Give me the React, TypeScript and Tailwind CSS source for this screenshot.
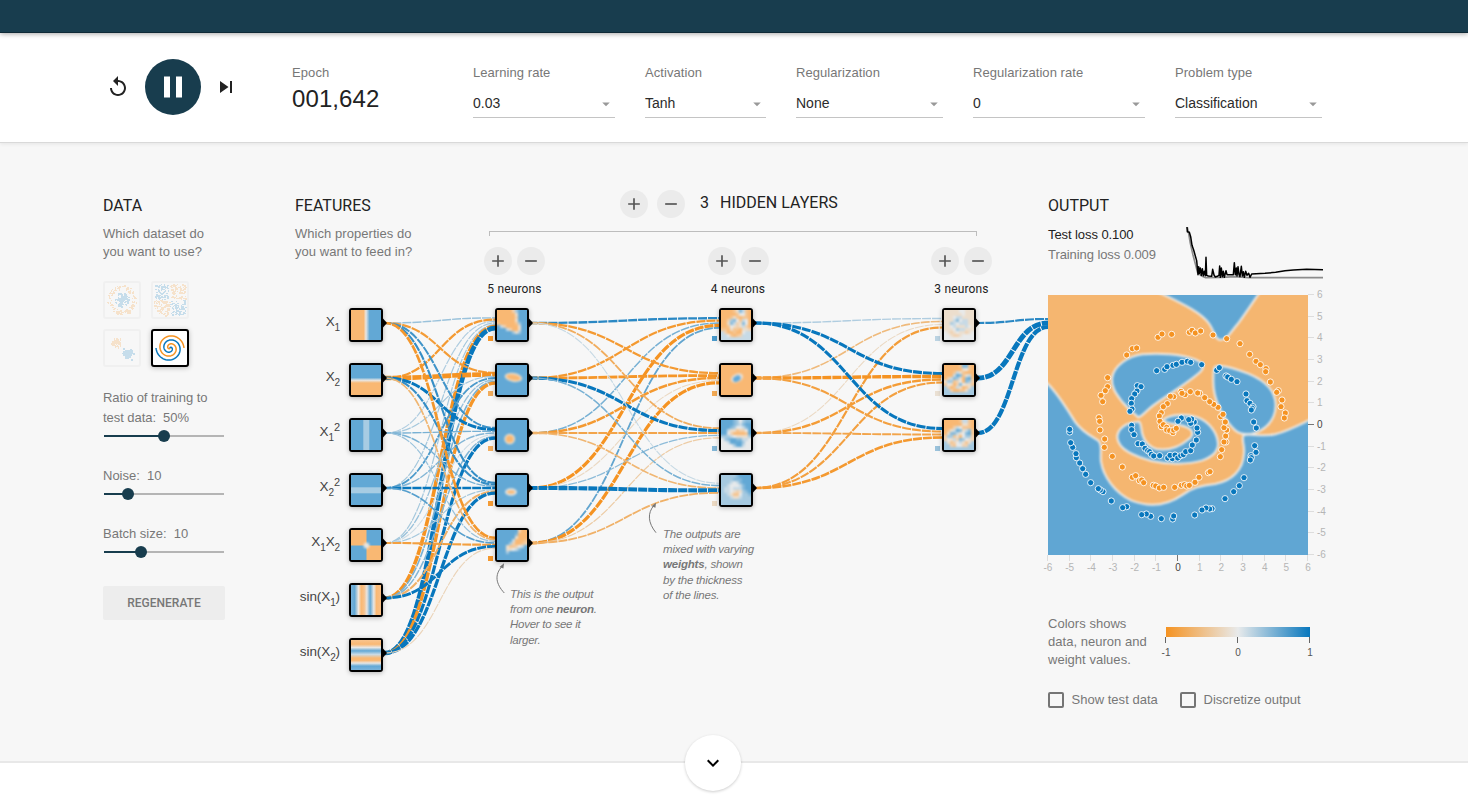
import React from "react";
import {
  MdAdd,
  MdArrowDropDown,
  MdKeyboardArrowDown,
  MdPause,
  MdRemove,
  MdReplay,
  MdSkipNext,
} from "react-icons/md";

const ORANGE = [245, 147, 34];
const GRAY = [232, 234, 235];
const BLUE = [8, 119, 189];

function mix(t: number, low: number[], high: number[]) {
  const end = t < 0 ? low : high;
  const k = Math.min(1, Math.abs(t));
  const c = GRAY.map((g, i) => Math.round(g + (end[i] - g) * k));
  return `rgb(${c[0]},${c[1]},${c[2]})`;
}

const weightColor = (t: number) => mix(t, ORANGE, BLUE);

/* ---------- controls bar ---------- */

const selects = [
  { label: "Learning rate", value: "0.03", width: "w-[142px]" },
  { label: "Activation", value: "Tanh", width: "w-[121px]" },
  { label: "Regularization", value: "None", width: "w-[147px]" },
  { label: "Regularization rate", value: "0", width: "w-[172px]" },
  { label: "Problem type", value: "Classification", width: "w-[147px]" },
];

function Controls() {
  return (
    <div className="relative z-[5] flex h-[110px] shrink-0 items-start border-b border-[#d9d9d9] bg-white pl-[106px] shadow-[0_1px_4px_rgba(0,0,0,0.08)]">
      <div className="flex h-[108px] w-[186px] items-center">
        <MdReplay size={24} className="text-[#222]" />
        <button className="ml-[15px] flex size-14 items-center justify-center rounded-full bg-[#183d4e]">
          <MdPause size={36} className="text-white" />
        </button>
        <MdSkipNext size={24} className="ml-[13px] text-[#222]" />
      </div>
      <div className="w-[181px] pt-[32px]">
        <div className="text-[13px] leading-4 tracking-[0.1px] text-[#777]">Epoch</div>
        <div className="text-[24px] leading-[36px] tracking-[0.1px] text-[#222]">001,642</div>
      </div>
      <div className="flex gap-[30px] pt-[32px]">
        {selects.map((s) => (
          <div key={s.label} className={s.width}>
            <div className="text-[13px] leading-4 tracking-[0.06px] whitespace-nowrap text-[#777]">{s.label}</div>
            <div className="mt-[7px] flex h-[30px] items-center justify-between border-b border-[#c4c4c4] pt-[2px] text-[14px] text-[#2b2b2b]">
              <span>{s.value}</span>
              <MdArrowDropDown size={18} className="text-[#999]" />
            </div>
          </div>
        ))}
      </div>
    </div>
  );
}

/* ---------- data column ---------- */

type Dot = { x: number; y: number; c: number };

function makeRandom(seed: number) {
  let s = seed;
  return () => {
    s = (s * 16807) % 2147483647;
    return s / 2147483647;
  };
}

function circleDots(): Dot[] {
  const rnd = makeRandom(41);
  const out: Dot[] = [];
  for (let i = 0; i < 120; i++) {
    const r = rnd() * 7;
    const a = rnd() * 6.283;
    out.push({ x: 17 + r * Math.cos(a), y: 17 + r * Math.sin(a), c: 1 });
  }
  for (let i = 0; i < 120; i++) {
    const r = 10.5 + rnd() * 4;
    const a = rnd() * 6.283;
    out.push({ x: 17 + r * Math.cos(a), y: 17 + r * Math.sin(a), c: -1 });
  }
  return out;
}

function xorDots(): Dot[] {
  const rnd = makeRandom(977);
  const out: Dot[] = [];
  for (let i = 0; i < 300; i++) {
    let x = rnd() * 29 - 14.5;
    let y = rnd() * 29 - 14.5;
    x += x > 0 ? 0.8 : -0.8;
    y += y > 0 ? 0.8 : -0.8;
    out.push({ x: 17 + x, y: 17 + y, c: x * y > 0 ? 1 : -1 });
  }
  return out;
}

function gaussDots(): Dot[] {
  const rnd = makeRandom(313);
  const n = () => (rnd() + rnd() + rnd() - 1.5) * 4.2;
  const out: Dot[] = [];
  for (let i = 0; i < 110; i++) {
    out.push({ x: 11 + n(), y: 12 + n(), c: -1 });
    out.push({ x: 23 + n(), y: 22.5 + n(), c: 1 });
  }
  return out;
}

function DotThumb({ dots }: { dots: Dot[] }) {
  return (
    <div className="size-[38px] rounded-[3px] border-2 border-[#f0f0f0]">
      <svg width="34" height="34" className="opacity-20" shapeRendering="crispEdges">
        {dots.map((d, i) => (
          <rect key={i} x={Math.floor(d.x)} y={Math.floor(d.y)} width={i % 2 ? 2 : 1} height={i % 3 ? 1 : 2} fill={d.c > 0 ? "#0877bd" : "#f59322"} />
        ))}
      </svg>
    </div>
  );
}

function spiralPath(delta: number) {
  const pts: string[] = [];
  for (let i = 0; i <= 90; i++) {
    const r = (i / 90) * 14;
    const t = 1.75 * (i / 90) * 2 * Math.PI + delta;
    pts.push(`${(17 + r * Math.sin(t)).toFixed(2)},${(17 - r * Math.cos(t)).toFixed(2)}`);
  }
  return pts.join(" ");
}

function SpiralThumb() {
  return (
    <div className="size-[38px] rounded-[3px] border-2 border-black bg-white shadow-[0_1px_5px_rgba(0,0,0,0.25)]">
      <svg width="34" height="34" fill="none" strokeWidth="1.5">
        <polyline points={spiralPath(0)} stroke="#0877bd" />
        <polyline points={spiralPath(Math.PI)} stroke="#f59322" />
      </svg>
    </div>
  );
}

function Slider({ fill }: { fill: string }) {
  return (
    <div className="mt-[2px] ml-px flex h-3 w-[120px] items-center">
      <div className={`h-[2px] bg-[#183d4e] ${fill}`} />
      <div className="relative z-[1] -mx-[6px] size-3 shrink-0 rounded-full bg-[#183d4e]" />
      <div className="h-[2px] flex-1 bg-[#b5b5b5]" />
    </div>
  );
}

function Heading({ children }: { children: React.ReactNode }) {
  return <h4 className="pt-px font-[Roboto] text-[16px] leading-6 text-[#222]">{children}</h4>;
}

function DataColumn() {
  return (
    <section className="w-[192px] text-[13px] text-[#777]">
      <Heading>DATA</Heading>
      <p className="mt-[7px] leading-[18px] tracking-[0.04px]">
        Which dataset do
        <br />
        you want to use?
      </p>
      <div className="mt-5 grid w-[86px] grid-cols-2 gap-[10px]">
        <DotThumb dots={circleDots()} />
        <DotThumb dots={xorDots()} />
        <DotThumb dots={gaussDots()} />
        <SpiralThumb />
      </div>
      <p className="mt-[21px] leading-5 tracking-[-0.05px]">
        Ratio of training to
        <br />
        test data:&nbsp; 50%
      </p>
      <Slider fill="w-[60px]" />
      <p className="mt-6 leading-5">Noise:&nbsp; 10</p>
      <Slider fill="w-[24px]" />
      <p className="mt-6 leading-5">Batch size:&nbsp; 10</p>
      <Slider fill="w-[37px]" />
      <button className="mt-7 flex h-[34px] w-[122px] items-center justify-center rounded-[2px] bg-[#ededed] font-[Roboto] text-[12px] font-medium text-[#777]">
        REGENERATE
      </button>
    </section>
  );
}

/* ---------- network ---------- */

const COLS = [366, 512, 736, 959];
const ROW0 = 325;
const STEP = 55;

// [value, stroke width] for each source, listed per destination node
type W = [number, number];
const layers: W[][][] = [
  [
    [[0.35, 1.4], [-0.92, 2.3], [0.25, 1.2], [0.3, 1.2], [0.3, 1.2], [-1, 3.6], [1, 4.6]],
    [[-0.9, 2.1], [-1, 4.6], [0.3, 1.2], [0.7, 1.8], [0.35, 1.3], [0.5, 1.6], [-0.97, 3.3]],
    [[0.75, 2], [1, 3], [0.5, 1.4], [0.45, 1.4], [0.12, 1.1], [0.45, 1.5], [1, 3.2]],
    [[0.8, 2.1], [0.8, 2.1], [0.5, 1.4], [1, 2.6], [0.3, 1.2], [-0.65, 2], [1, 3.3]],
    [[-0.95, 2.7], [-0.6, 1.7], [0.35, 1.2], [0.65, 1.6], [-0.85, 2.1], [1, 2.9], [-0.25, 1.1]],
  ],
  [
    [[0.85, 2.3], [-0.93, 2.3], [0.5, 1.5], [-1, 3.2], [0.6, 1.8]],
    [[-0.92, 2.3], [-0.97, 2.8], [-0.93, 2.5], [-0.2, 1.1], [-1, 3.2]],
    [[-0.7, 1.8], [1, 3.1], [-0.8, 2], [0.4, 1.3], [-0.35, 1.2]],
    [[0.15, 1.1], [0.5, 1.5], [-0.6, 1.6], [1, 4.1], [-0.65, 1.8]],
  ],
  [
    [[0.25, 1.4], [-0.55, 1.6], [-0.2, 1.1], [-0.88, 2.2]],
    [[1, 3.1], [-1, 3.4], [-0.9, 2.4], [-0.85, 2.1]],
    [[1, 3.1], [-0.85, 2.1], [-0.8, 1.9], [-0.93, 2.6]],
  ],
  [[[0.85, 2.2], [1, 5], [1, 4.2]]],
];

function Links() {
  const out: React.ReactNode[] = [];
  layers.forEach((dests, l) => {
    const x0 = COLS[l] + 19;
    const x1 = l === 3 ? 1048 : COLS[l + 1] - 17;
    dests.forEach((sources, d) => {
      sources.forEach(([v, w], s) => {
        const y0 = ROW0 - 2 + s * STEP;
        const y1 = ROW0 - 2 + d * STEP + ((s - (sources.length - 1) / 2) / sources.length) * 12;
        const xm = (x0 + x1) / 2;
        out.push(
          <path
            key={`${l}-${d}-${s}`}
            d={`M${x0},${y0} C${xm},${y0} ${xm},${y1} ${x1},${y1}`}
            stroke={weightColor(v)}
            strokeWidth={w}
            strokeDasharray="9 1"
            strokeDashoffset={-547.3}
          />,
        );
      });
    });
  });
  return <g fill="none">{out}</g>;
}

const biases = [
  [-0.95, -0.7, -0.7, -0.9, -0.95],
  [0.7, -0.75, 0.45, -0.2],
  [0.2, -0.12, 0.35],
];

const HB = "#62a8d5";
const HO = "#f9b873";

// Activation map of one neuron: a 10x10 grid of values, 0 = orange, 4 = neutral, 8 = blue.
function Cells({ rows }: { rows: string }) {
  const grid = rows.split(" ");
  const clamp = (n: number) => Math.max(0, Math.min(9, n));
  const cells: React.ReactNode[] = [];
  for (let r = -1; r <= 10; r++) {
    for (let c = -1; c <= 10; c++) {
      const v = (Number(grid[clamp(r)][clamp(c)]) - 4) / 4;
      cells.push(
        <rect key={`${r},${c}`} x={c * 3} y={r * 3} width="3" height="3" fill={mix(v, [249, 184, 115], [98, 168, 213])} />,
      );
    }
  }
  return (
    <g filter="url(#cells)" shapeRendering="crispEdges">
      {cells}
    </g>
  );
}

const textures: React.ReactNode[][] = [
  [
    <rect width="30" height="30" fill="url(#gx1)" />,
    <rect width="30" height="30" fill="url(#gx2)" />,
    <g>
      <rect width="30" height="30" fill={HB} />
      <rect x="12.3" width="6" height="30" fill="#a7cce3" />
    </g>,
    <g>
      <rect width="30" height="30" fill={HB} />
      <rect y="12.3" width="30" height="6" fill="#a7cce3" />
    </g>,
    <g>
      <rect width="30" height="30" fill={HB} />
      <rect width="15.5" height="15.5" fill={HO} />
      <rect x="15.5" y="15.5" width="15" height="15" fill={HO} />
      <circle cx="15.5" cy="15.5" r="3" fill="#e6e4e0" filter="url(#soft)" />
    </g>,
    <rect width="30" height="30" fill="url(#gs1)" />,
    <rect width="30" height="30" fill="url(#gs2)" />,
  ],
  [
    <Cells rows="0000026888 0000003888 0000002888 0000003888 1000001688 8520000388 8885200388 8888863688 8888888888 8888888888" />,
    <g filter="url(#soft)">
      <rect x="-9" y="-9" width="48" height="48" fill={HB} />
      <ellipse cx="16.5" cy="12.3" rx="8" ry="3.6" transform="rotate(10 16 12)" fill={HO} stroke="#f0e2d0" strokeWidth="1.5" />
    </g>,
    <g filter="url(#soft)">
      <rect x="-9" y="-9" width="48" height="48" fill={HB} />
      <circle cx="12.7" cy="19" r="4.6" fill={HO} stroke="#f0e2d0" strokeWidth="1.5" />
    </g>,
    <g filter="url(#soft)">
      <rect x="-9" y="-9" width="48" height="48" fill={HB} />
      <ellipse cx="14" cy="17" rx="5" ry="2.8" fill={HO} stroke="#e5e6e4" strokeWidth="2" />
    </g>,
    <Cells rows="8888888200 8888887000 8888883000 8888850001 8888620012 8883112458 8883345788 8886888888 8888888888 8888888888" />,
  ],
  [
    <Cells rows="0000137510 0000014410 0001310110 0026741540 0037523740 0014323520 1103110332 5200100455 5541012555 5555555555" />,
    <g filter="url(#soft)">
      <rect x="-9" y="-9" width="48" height="48" fill={HO} />
      <ellipse cx="16" cy="13" rx="6.5" ry="4.2" transform="rotate(-25 16 13)" fill="#e9dfd3" />
      <ellipse cx="15.5" cy="13.5" rx="4" ry="2.8" transform="rotate(-30 16 13)" fill="#5fa9dc" />
    </g>,
    <Cells rows="8888764677 8888765788 8887644578 8853312248 8842000018 6665433336 4678877554 4458888644 4444688544 4444444444" />,
    <Cells rows="6666678888 6666777888 6665457888 6654445788 6554555788 6554323678 6653114667 6665335666 6666666666 6666666666" />,
  ],
  [
    <Cells rows="3333344333 3333334333 3334553333 3335745533 3365455533 3345333543 3334655333 4323433234 4432234444 4444444444" />,
    <Cells rows="0000017710 0000003410 0001531000 0005971350 0257630781 3661240762 1430274331 6201530136 6620011366 6666666666" />,
    <Cells rows="0000015510 0000003310 0002541110 0135873571 0377534781 2661304662 2435276432 6312453136 6621442266 6666666666" />,
  ],
];

const sub = "relative top-[5px] text-[10px]";
const sup = "relative -top-[5px] text-[11px]";

const featureLabels: React.ReactNode[] = [
  <>X<span className={sub}>1</span></>,
  <>X<span className={sub}>2</span></>,
  <>X<span className={sub}>1</span><span className={sup}>2</span></>,
  <>X<span className={sub}>2</span><span className={sup}>2</span></>,
  <>X<span className={sub}>1</span>X<span className={sub}>2</span></>,
  <>sin(X<span className={sub}>1</span>)</>,
  <>sin(X<span className={sub}>2</span>)</>,
];

function Node({ col, row, children }: { col: number; row: number; children: React.ReactNode }) {
  return (
    <div
      className="absolute size-[34px] rounded-[3px] border-2 border-black bg-black shadow-[0_1px_5px_rgba(0,0,0,0.28)]"
      style={{ left: COLS[col] - 17 - 295, top: ROW0 - 17 + row * STEP - 300 }}
    >
      <svg width="30" height="30" className="overflow-hidden">
        {children}
      </svg>
      {col === 0 && (
        <div className="absolute top-0 right-[41px] text-[13.5px] leading-[24px] tracking-[-0.1px] whitespace-nowrap text-[#444]">
          {featureLabels[row]}
        </div>
      )}
    </div>
  );
}

function RoundButton({ plus }: { plus?: boolean }) {
  return (
    <button className="flex size-7 items-center justify-center rounded-full bg-[#ebebeb] text-[#555]">
      {plus ? <MdAdd size={20} /> : <MdRemove size={20} />}
    </button>
  );
}

function Network() {
  return (
    <section className="relative w-[753px]">
      <div className="flex h-[107px]">
        <div className="w-[189px] shrink-0">
          <Heading>FEATURES</Heading>
          <p className="mt-[7px] text-[13px] leading-[18px] tracking-[0.05px] text-[#777]">
            Which properties do
            <br />
            you want to feed in?
          </p>
        </div>
        <div className="-mt-[3px] w-[508px]">
          <div className="flex h-7 items-center pl-[136px]">
            <RoundButton plus />
            <span className="w-[9px]" />
            <RoundButton />
            <span className="ml-[15px] -mt-[3px] w-5 font-[Roboto] text-[16px] text-[#222]">3</span>
            <span className="-mt-[3px] font-[Roboto] text-[16px] whitespace-nowrap text-[#222]">HIDDEN LAYERS</span>
          </div>
          <div className="mt-[13px] ml-[5px] h-[5px] w-[488px] border-x border-t border-[#bdbdbd]" />
          <div className="mt-[11px] flex justify-between">
            {[5, 4, 3].map((n) => (
              <div key={n} className="w-[61px]">
                <div className="flex justify-between">
                  <RoundButton plus />
                  <RoundButton />
                </div>
                <div className="mt-[6px] text-center font-[Roboto] text-[12px] leading-4 tracking-[0.15px] text-[#222]">{n} neurons</div>
              </div>
            ))}
          </div>
        </div>
      </div>
      <div className="relative h-[380px] w-[753px]">
        <svg width="753" height="380" viewBox="295 300 753 380" className="block">
          <defs>
            <filter id="soft" x="-30%" y="-30%" width="160%" height="160%" colorInterpolationFilters="sRGB">
              <feGaussianBlur stdDeviation="1" />
            </filter>
            <filter id="cells" x="0" y="0" width="100%" height="100%" colorInterpolationFilters="sRGB">
              <feGaussianBlur stdDeviation="1.15" />
            </filter>
            <linearGradient id="gx1">
              <stop offset="0.42" stopColor={HO} />
              <stop offset="0.5" stopColor="#e8e6e3" />
              <stop offset="0.62" stopColor={HB} />
            </linearGradient>
            <linearGradient id="gx2" x2="0" y2="1">
              <stop offset="0.42" stopColor={HB} />
              <stop offset="0.51" stopColor="#e8e6e3" />
              <stop offset="0.6" stopColor={HO} />
            </linearGradient>
            <linearGradient id="gs1">
              <stop offset="0" stopColor="#7ab3da" />
              <stop offset="0.12" stopColor={HB} />
              <stop offset="0.25" stopColor="#efe7de" />
              <stop offset="0.34" stopColor={HO} />
              <stop offset="0.44" stopColor="#f7c28c" />
              <stop offset="0.53" stopColor="#e6e4e2" />
              <stop offset="0.64" stopColor={HB} />
              <stop offset="0.76" stopColor="#e8e6e3" />
              <stop offset="0.85" stopColor={HO} />
              <stop offset="1" stopColor="#f8bf86" />
            </linearGradient>
            <linearGradient id="gs2" x2="0" y2="1">
              <stop offset="0" stopColor="#f8c48f" />
              <stop offset="0.14" stopColor={HO} />
              <stop offset="0.25" stopColor="#e8e6e3" />
              <stop offset="0.36" stopColor={HB} />
              <stop offset="0.48" stopColor="#c9dbe6" />
              <stop offset="0.6" stopColor={HO} />
              <stop offset="0.68" stopColor={HO} />
              <stop offset="0.77" stopColor="#e8e6e3" />
              <stop offset="0.87" stopColor={HB} />
              <stop offset="1" stopColor="#7ab3da" />
            </linearGradient>
          </defs>
          <Links />
          {biases.map((vals, l) =>
            vals.map((v, i) => (
              <rect key={`${l}-${i}`} x={COLS[l + 1] - 24} y={ROW0 + 11 + i * STEP} width="5" height="5" fill={weightColor(v)} />
            )),
          )}
          {textures.map((rows, c) =>
            rows.map((_, r) => {
              const x = COLS[c] + 16;
              const y = ROW0 - 2 + r * STEP;
              return <path key={`${c}-${r}`} d={`M${x} ${y - 4.5}h1l4 4.5l-4 4.5h-1z`} fill="#000" />;
            }),
          )}
          <g fill="none" stroke="#777" strokeWidth="1">
            <path d="M504.3 593C496 584 494 575 502.3 566" />
            <path d="M656 532.7C648 523 647 513 654.3 505" />
          </g>
          <path d="M504 563.3L499.5 567L503.4 568.5Z" fill="#777" />
          <path d="M656 502.7L651.5 506.2L655.4 507.8Z" fill="#777" />
        </svg>
        {textures.map((rows, c) =>
          rows.map((tex, r) => (
            <Node key={`${c}-${r}`} col={c} row={r}>
              {tex}
            </Node>
          )),
        )}
        <p className="absolute top-[287px] left-[215px] text-[11.5px] leading-[15.2px] tracking-[-0.25px] whitespace-nowrap text-[#777] italic">
          This is the output
          <br />
          from one <b>neuron</b>.
          <br />
          Hover to see it
          <br />
          larger.
        </p>
        <p className="absolute top-[227px] left-[368px] text-[11.5px] leading-[15.2px] tracking-[-0.2px] whitespace-nowrap text-[#777] italic">
          The outputs are
          <br />
          mixed with varying
          <br />
          <b>weights</b>, shown
          <br />
          by the thickness
          <br />
          of the lines.
        </p>
      </div>
    </section>
  );
}

/* ---------- output column ---------- */

const orangePoints = "369,442 381,432 410,433 463,427 471,421 481,429 497,423 534,435 575,446 615,461 644,493 663,514 676,524 693,536 692,545 706,576 730,602 725,607 741,630 738,650 751,669 748,684 292,476 305,474 275,495 218,563 218,590 211,602 198,616 203,635 192,683 194,694 195,720 209,747 208,772 232,799 262,831 292,862 302,857 313,872 320,870 326,878 355,886 362,888 373,894 386,892 419,892 439,886 448,884 455,888 463,886 480,877 492,862 520,848 525,845 556,800 560,779 573,756 567,756 572,738 575,720 567,713 571,696 557,680 564,673 549,652 536,643 524,635 509,623 494,610 488,609 466,605 450,614 438,604 441,610 416,620 406,619 397,641 385,650 379,668 373,678 375,694 379,710 385,704 395,712 395,720 404,722 414,728 416,720 424,715";
const bluePoints = "365,542 389,538 396,530 414,526 424,523 441,517 457,514 467,517 500,524 545,541 553,533 573,558 578,561 589,568 606,575 633,612 636,632 645,640 654,650 652,655 649,660 656,696 664,714 659,767 663,787 648,797 649,803 646,810 627,863 613,887 596,905 570,926 531,956 524,957 513,954 501,960 479,975 413,987 416,978 379,986 347,979 334,972 320,974 275,950 263,953 229,933 204,905 196,900 190,896 167,878 152,853 143,836 134,819 124,803 123,791 113,772 107,758 104,726 104,718 307,587 318,590 306,603 299,612 290,626 289,640 291,657 285,664 290,706 290,719 297,734 309,761 322,762 330,775 338,782 344,785 349,793 356,798 374,797 398,804 412,806 405,796 420,795 428,804 437,797 445,794 452,785 467,782 472,765 484,750 488,727 486,714 478,696 467,700 470,687 461,689 439,684 429,694";

function Points({ list, fill }: { list: string; fill: string }) {
  return (
    <g fill={fill} stroke="#fff" strokeOpacity="0.85" strokeWidth="3">
      {list.split(" ").map((p, i) => {
        const [x, y] = p.split(",").map(Number);
        return <circle key={i} cx={x} cy={y} r="9.3" />;
      })}
    </g>
  );
}

function Heatmap() {
  const ticks = Array.from({ length: 13 }, (_, i) => i - 6);
  return (
    <svg width="290" height="285" viewBox="1040 290 290 285" className="-ml-2 block">
      <svg x="1048" y="295" width="260" height="260" viewBox="39 315 780 780" overflow="hidden">
        <defs>
          <filter id="edge" x="-10%" y="-10%" width="120%" height="120%" colorInterpolationFilters="sRGB">
            <feGaussianBlur stdDeviation="2.6" />
          </filter>
        </defs>
        <rect x="39" y="315" width="780" height="780" fill="#f5b670" />
        <g fill="#60a6d3" stroke="#efece8" strokeWidth="6" filter="url(#edge)">
          <path d="M350 298L388 315C440 340 500 368 523 402C540 427 540 450 556 450C576 450 588 424 608 402C632 370 658 330 670 313L680 298Z" />
          <path d="M310 682C300 672 285 662 262 636C240 608 229 590 231 565C236 525 282 498 322 493C370 488 440 492 480 508C505 518 508 530 499 542C480 565 400 613 355 646C335 660 322 680 310 682Z" />
          <path d="M540 530C560 522 600 535 640 551C690 572 722 603 722 645C722 680 702 708 672 724C645 736 612 738 592 712C560 680 535 625 535 575C535 550 534 535 540 530Z" />
          <path d="M308 695C270 698 246 718 247 743C250 780 300 799 350 813C400 824 460 824 500 812C530 802 550 787 549 760C547 727 520 692 484 681C452 671 405 672 384 690C396 706 440 698 466 718C478 730 472 742 455 752C430 772 400 782 365 777C335 768 322 745 319 715C317 705 316 693 308 695Z" />
          <path d="M18 560L39 582C70 613 95 655 120 695C140 725 168 738 190 752C203 763 195 790 198 815C205 860 240 908 290 932C350 955 400 943 440 916C470 893 500 887 540 882C590 873 625 840 627 790C630 765 618 748 626 735C650 729 680 742 720 733C760 722 790 706 819 692L845 680V1120H18Z" />
        </g>
        <Points list={orangePoints} fill="#f59322" />
        <Points list={bluePoints} fill="#0877bd" />
      </svg>
      <g fontSize="10" fontFamily="Liberation Sans, sans-serif">
        {ticks.map((t) => {
          const x = 1178 + t * 21.667;
          const y = 425 - t * 21.667;
          const color = t === 0 ? "#444" : "#b5b5b5";
          const line = t === 0 ? "#777" : "#ddd";
          return (
            <g key={t}>
              <path d={`M${Math.round(x) - 0.5} 555v6`} stroke={line} />
              <path d={`M1308 ${Math.round(y) - 0.5}h6`} stroke={line} />
              <text x={x} y="571" textAnchor="middle" fill={color}>{t}</text>
              <text x="1317" y={y + 3} fill={color}>{t}</text>
            </g>
          );
        })}
      </g>
    </svg>
  );
}

function LossChart() {
  return (
    <svg width="140" height="58" viewBox="450 105 420 174" fill="none" strokeLinejoin="round">
      <path d="M457 112L461 130L466 160L474 195L482 225L488 248L500 258L512 263L560 262L600 260L640 263L864 263" stroke="#8c8c8c" strokeWidth="5" />
      <path
        d="M456 111L457 125L463 127L467 140L471 166L476 180L481 198L485 212L487 232L489 254L491 230L493 250L496 234L499 256L502 236L505 257L508 244L511 257L513 202L515 256L520 258L530 259L533 238L537 255L541 261L549 258L552 256L554 228L556 262L559 234L562 260L565 244L568 262L573 242L576 254L595 254L598 218L601 254L604 234L606 258L609 230L612 254L615 260L619 229L622 258L625 245L628 262L632 244L636 256L641 250L645 262L650 252L690 250L722 247L750 242L775 240L815 238L864 239"
        stroke="#000"
        strokeWidth="4.5"
      />
    </svg>
  );
}

function Check({ label }: { label: string }) {
  return (
    <label className="flex items-center gap-[7.5px] text-[13px] leading-4 tracking-[0.02px] whitespace-nowrap text-[#777]">
      <span className="size-4 rounded-[2px] border-2 border-[#757575]" />
      {label}
    </label>
  );
}

function OutputColumn() {
  return (
    <section className="w-[290px]">
      <Heading>OUTPUT</Heading>
      <div className="flex h-[72px] justify-between pt-[4px] pr-[13px]">
        <div className="pt-[3px] text-[13px] leading-5 tracking-[-0.08px] whitespace-nowrap">
          <div className="text-[#222]">Test loss 0.100</div>
          <div className="text-[#777]">Training loss 0.009</div>
        </div>
        <div className="pt-[3px]">
          <LossChart />
        </div>
      </div>
      <Heatmap />
      <div className="mt-10 flex">
        <p className="w-[112px] text-[13px] leading-[18px] tracking-[0.03px] text-[#777]">
          Colors shows
          <br />
          data, neuron and
          <br />
          weight values.
        </p>
        <svg width="156" height="54" viewBox="1160 615 156 54" fontSize="10" fontFamily="Liberation Sans, sans-serif" fill="#555" textAnchor="middle">
          <defs>
            <linearGradient id="scale">
              <stop offset="0" stopColor="#f59322" />
              <stop offset="0.5" stopColor="#e8eaeb" />
              <stop offset="1" stopColor="#0877bd" />
            </linearGradient>
          </defs>
          <rect x="1166" y="627" width="144" height="10" fill="url(#scale)" />
          <path d="M1165.5 637v6M1237.5 637v6M1309.5 637v6" stroke="#666" />
          <text x="1166" y="656">-1</text>
          <text x="1238" y="656">0</text>
          <text x="1310" y="656">1</text>
        </svg>
      </div>
      <div className="mt-[23px] flex">
        <div className="w-[132px]">
          <Check label="Show test data" />
        </div>
        <Check label="Discretize output" />
      </div>
    </section>
  );
}

export default function App() {
  return (
    <div className="flex h-[804px] w-[1468px] flex-col overflow-hidden bg-white font-['Liberation_Sans',Arial,sans-serif]">
      <header className="relative z-10 h-[33px] shrink-0 border-b border-[#0f2a37] bg-[#183d4e] shadow-[0_1px_5px_rgba(0,0,0,0.35)]" />
      <Controls />
      <main className="relative flex h-[620px] shrink-0 border-b-2 border-[#e8e8e8] bg-[#f7f7f7] pt-[50px] pl-[103px]">
        <DataColumn />
        <Network />
        <OutputColumn />
        <button className="absolute -bottom-[30px] left-[685px] flex size-14 items-center justify-center rounded-full bg-white text-black shadow-[0_1px_3px_rgba(0,0,0,0.2)]">
          <MdKeyboardArrowDown size={24} />
        </button>
      </main>
    </div>
  );
}
